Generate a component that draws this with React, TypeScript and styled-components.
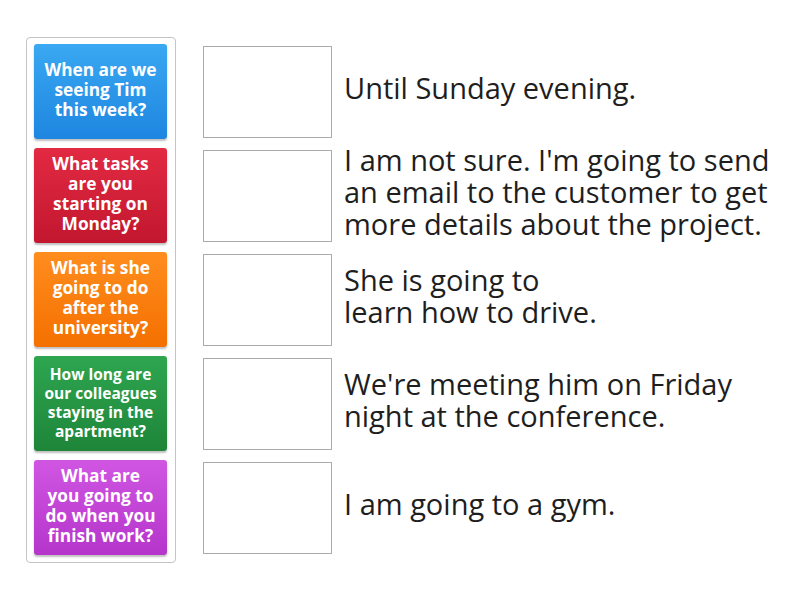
import { createGlobalStyle, styled } from "styled-components";

const GlobalStyle = createGlobalStyle`
  html, body {
    margin: 0;
    padding: 0;
    background: #fff;
  }
  body {
    font-family: "Open Sans", "Noto Sans", sans-serif;
  }
`;

const Page = styled.div`
  display: flex;
  align-items: flex-start;
  padding: 37px 0 0 26px;
  gap: 27px;
`;

const CardPanel = styled.div`
  width: 133px;
  padding: 6px 8px 7px 7px;
  border: 1px solid #c4c4c4;
  border-radius: 4px;

  display: flex;
  flex-direction: column;
  gap: 9px;
`;

const Card = styled.div<{ $top: string; $bottom: string; $small?: boolean }>`
  height: 95px;
  box-sizing: border-box;
  padding-bottom: ${(p) => (p.$small ? "1px" : "3px")};
  border-radius: 3px;
  background: linear-gradient(${(p) => p.$top}, ${(p) => p.$bottom});
  box-shadow: 0 2px 2px rgba(0, 0, 0, 0.25);

  display: flex;
  flex-direction: column;
  align-items: center;
  justify-content: center;
  text-align: center;

  color: #fff;
  font-weight: 700;
  font-size: ${(p) => (p.$small ? "15.5px" : "17.3px")};
  line-height: ${(p) => (p.$small ? "19px" : "20px")};
  white-space: nowrap;
`;

const Answers = styled.div`
  padding-top: 9px;
  display: flex;
  flex-direction: column;
  gap: 12px;
`;

const AnswerRow = styled.div`
  display: flex;
  align-items: center;
  gap: 12px;
  height: 92px;
`;

const DropBox = styled.div`
  width: 129px;
  height: 92px;
  box-sizing: border-box;
  border: 1px solid #aaa;
  flex-shrink: 0;
`;

const AnswerText = styled.div`
  color: #1e1e1e;
  font-size: 29px;
  line-height: 32px;
  white-space: nowrap;
  margin-top: -9px;
`;

const cards = [
  { lines: ["When are we", "seeing Tim", "this week?"], top: "#3aa8f2", bottom: "#1e86e0" },
  { lines: ["What tasks", "are you", "starting on", "Monday?"], top: "#e22a42", bottom: "#c2172f" },
  {
    lines: ["What is she", "going to do", "after the", "university?"],
    top: "#ff8d1e",
    bottom: "#f47000",
  },
  {
    lines: ["How long are", "our colleagues", "staying in the", "apartment?"],
    top: "#2ea650",
    bottom: "#1e8539",
    small: true,
  },
  {
    lines: ["What are", "you going to", "do when you", "finish work?"],
    top: "#d056e2",
    bottom: "#b535cb",
  },
];

const answers = [
  ["Until Sunday evening."],
  [
    "I am not sure. I'm going to send",
    "an email to the customer to get",
    "more details about the project.",
  ],
  ["She is going to", "learn how to drive."],
  ["We're meeting him on Friday", "night at the conference."],
  ["I am going to a gym."],
];

const App = () => {
  return (
    <>
      <GlobalStyle />
      <Page>
        <CardPanel>
          {cards.map((c, i) => (
            <Card key={i} $top={c.top} $bottom={c.bottom} $small={c.small}>
              {c.lines.map((l, j) => (
                <div key={j}>{l}</div>
              ))}
            </Card>
          ))}
        </CardPanel>
        <Answers>
          {answers.map((lines, i) => (
            <AnswerRow key={i}>
              <DropBox />
              <AnswerText>
                {lines.map((l, j) => (
                  <div key={j}>{l}</div>
                ))}
              </AnswerText>
            </AnswerRow>
          ))}
        </Answers>
      </Page>
    </>
  );
};

export default App;
